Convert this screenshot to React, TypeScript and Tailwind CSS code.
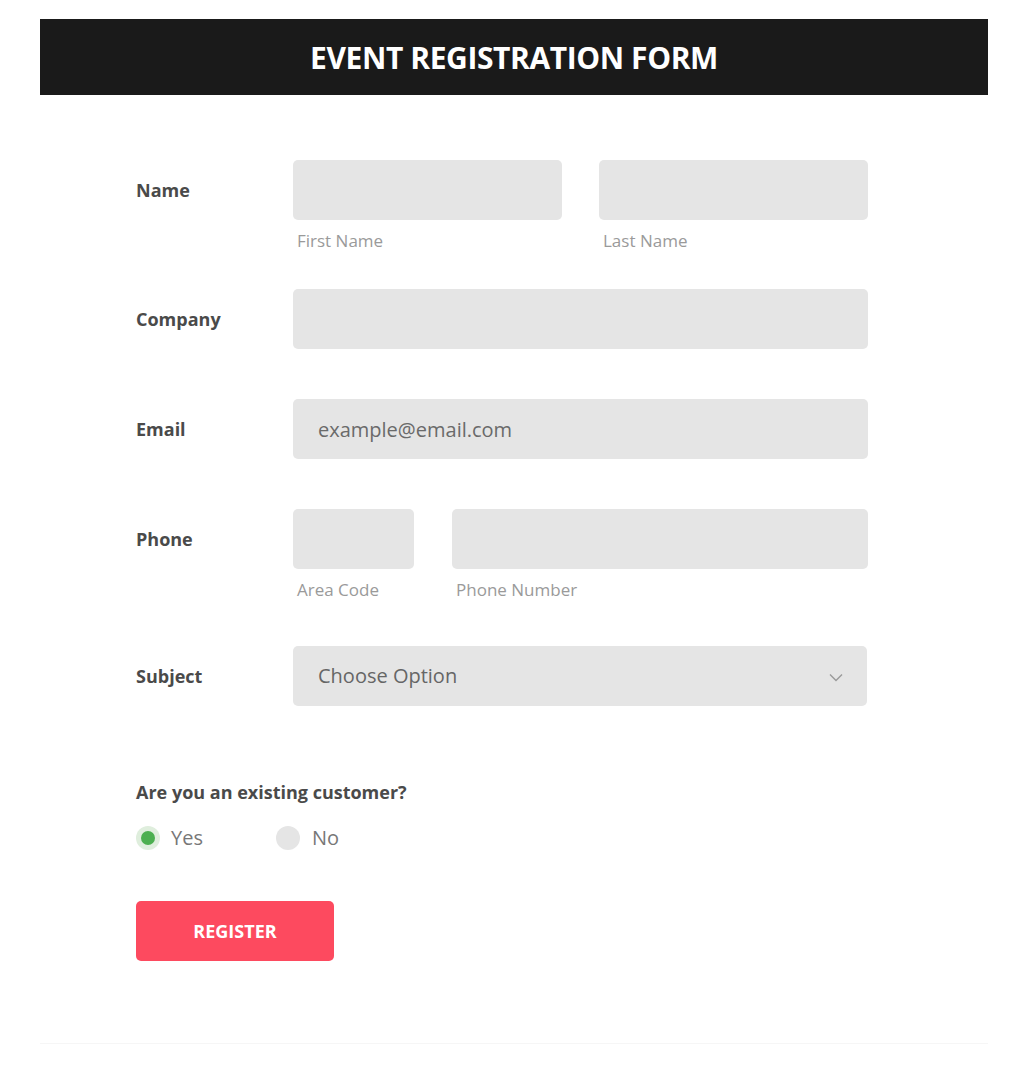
import React, { useState } from 'react';

const inputCls = 'h-[60px] rounded-[5px] bg-[#e5e5e5] outline-none px-[25px] text-[20px] text-[#666] placeholder:text-[#6a6a6a]';

const Label: React.FC<{ children: React.ReactNode }> = ({ children }) => (
  <div className="w-[157px] shrink-0 h-[60px] flex items-center text-[18px] font-bold text-[#4a4a4a]">
    {children}
  </div>
);

const SubLabel: React.FC<{ children: React.ReactNode }> = ({ children }) => (
  <span className="block mt-[11px] pl-[4px] text-[17px] leading-[20px] text-[#9a9a9a]">{children}</span>
);

const App: React.FC = () => {
  const [customer, setCustomer] = useState<'yes' | 'no'>('yes');

  return (
    <div className="min-h-screen bg-white pl-[40px] pr-[30px] pt-[19px]" style={{ fontFamily: '"Open Sans", "Liberation Sans", sans-serif' }}>
      <div className="h-[76px] bg-[#1a1a1a] flex items-center justify-center">
        <h1 className="text-[30px] font-bold text-white tracking-[-0.4px]">EVENT REGISTRATION FORM</h1>
      </div>

      <form className="pl-[96px] pt-[65px] pb-[82px] border-b border-[#f6f6f6]" onSubmit={(e) => e.preventDefault()}>
        {/* name */}
        <div className="flex">
          <Label>Name</Label>
          <div className="flex gap-[37px]">
            <div>
              <input className={`${inputCls} w-[269px]`} />
              <SubLabel>First Name</SubLabel>
            </div>
            <div>
              <input className={`${inputCls} w-[269px]`} />
              <SubLabel>Last Name</SubLabel>
            </div>
          </div>
        </div>

        <div className="flex mt-[38px]">
          <Label>Company</Label>
          <input className={`${inputCls} w-[575px]`} />
        </div>

        <div className="flex mt-[50px]">
          <Label>Email</Label>
          <input className={`${inputCls} w-[575px]`} placeholder="example@email.com" />
        </div>

        <div className="flex mt-[50px]">
          <Label>Phone</Label>
          <div className="flex gap-[38px]">
            <div>
              <input className={`${inputCls} w-[121px]`} />
              <SubLabel>Area Code</SubLabel>
            </div>
            <div>
              <input className={`${inputCls} w-[416px]`} />
              <SubLabel>Phone Number</SubLabel>
            </div>
          </div>
        </div>

        <div className="flex mt-[46px]">
          <Label>Subject</Label>
          <div className="relative w-[574px]">
            <select className={`${inputCls} w-full appearance-none`} defaultValue="">
              <option value="" disabled>Choose Option</option>
              <option>General</option>
              <option>Support</option>
            </select>
            <svg className="absolute right-[24px] top-[27px] pointer-events-none" width="14" height="9" viewBox="0 0 14 9" fill="none">
              <path d="M1 1.5 L7 7.5 L13 1.5" stroke="#9a9a9a" strokeWidth="1.4" />
            </svg>
          </div>
        </div>

        <p className="mt-[74px] text-[18px] leading-[24px] font-bold text-[#4a4a4a]">Are you an existing customer?</p>
        <div className="flex items-center mt-[22px] h-[24px]">
          <button type="button" onClick={() => setCustomer('yes')} className="flex items-center w-[140px]">
            <span className={`w-[24px] h-[24px] rounded-full flex items-center justify-center ${customer === 'yes' ? 'bg-[#dfeedd]' : 'bg-[#e5e5e5]'}`}>
              {customer === 'yes' && <span className="w-[14px] h-[14px] rounded-full bg-[#4caf50]" />}
            </span>
            <span className="ml-[11px] text-[20px] text-[#777]">Yes</span>
          </button>
          <button type="button" onClick={() => setCustomer('no')} className="flex items-center">
            <span className={`w-[24px] h-[24px] rounded-full flex items-center justify-center ${customer === 'no' ? 'bg-[#dfeedd]' : 'bg-[#e5e5e5]'}`}>
              {customer === 'no' && <span className="w-[14px] h-[14px] rounded-full bg-[#4caf50]" />}
            </span>
            <span className="ml-[12px] text-[20px] text-[#777]">No</span>
          </button>
        </div>

        <button type="submit" className="mt-[51px] w-[198px] h-[60px] rounded-[5px] bg-[#fd4a5f] text-white text-[18px] font-bold">
          REGISTER
        </button>
      </form>
    </div>
  );
};

export default App;
